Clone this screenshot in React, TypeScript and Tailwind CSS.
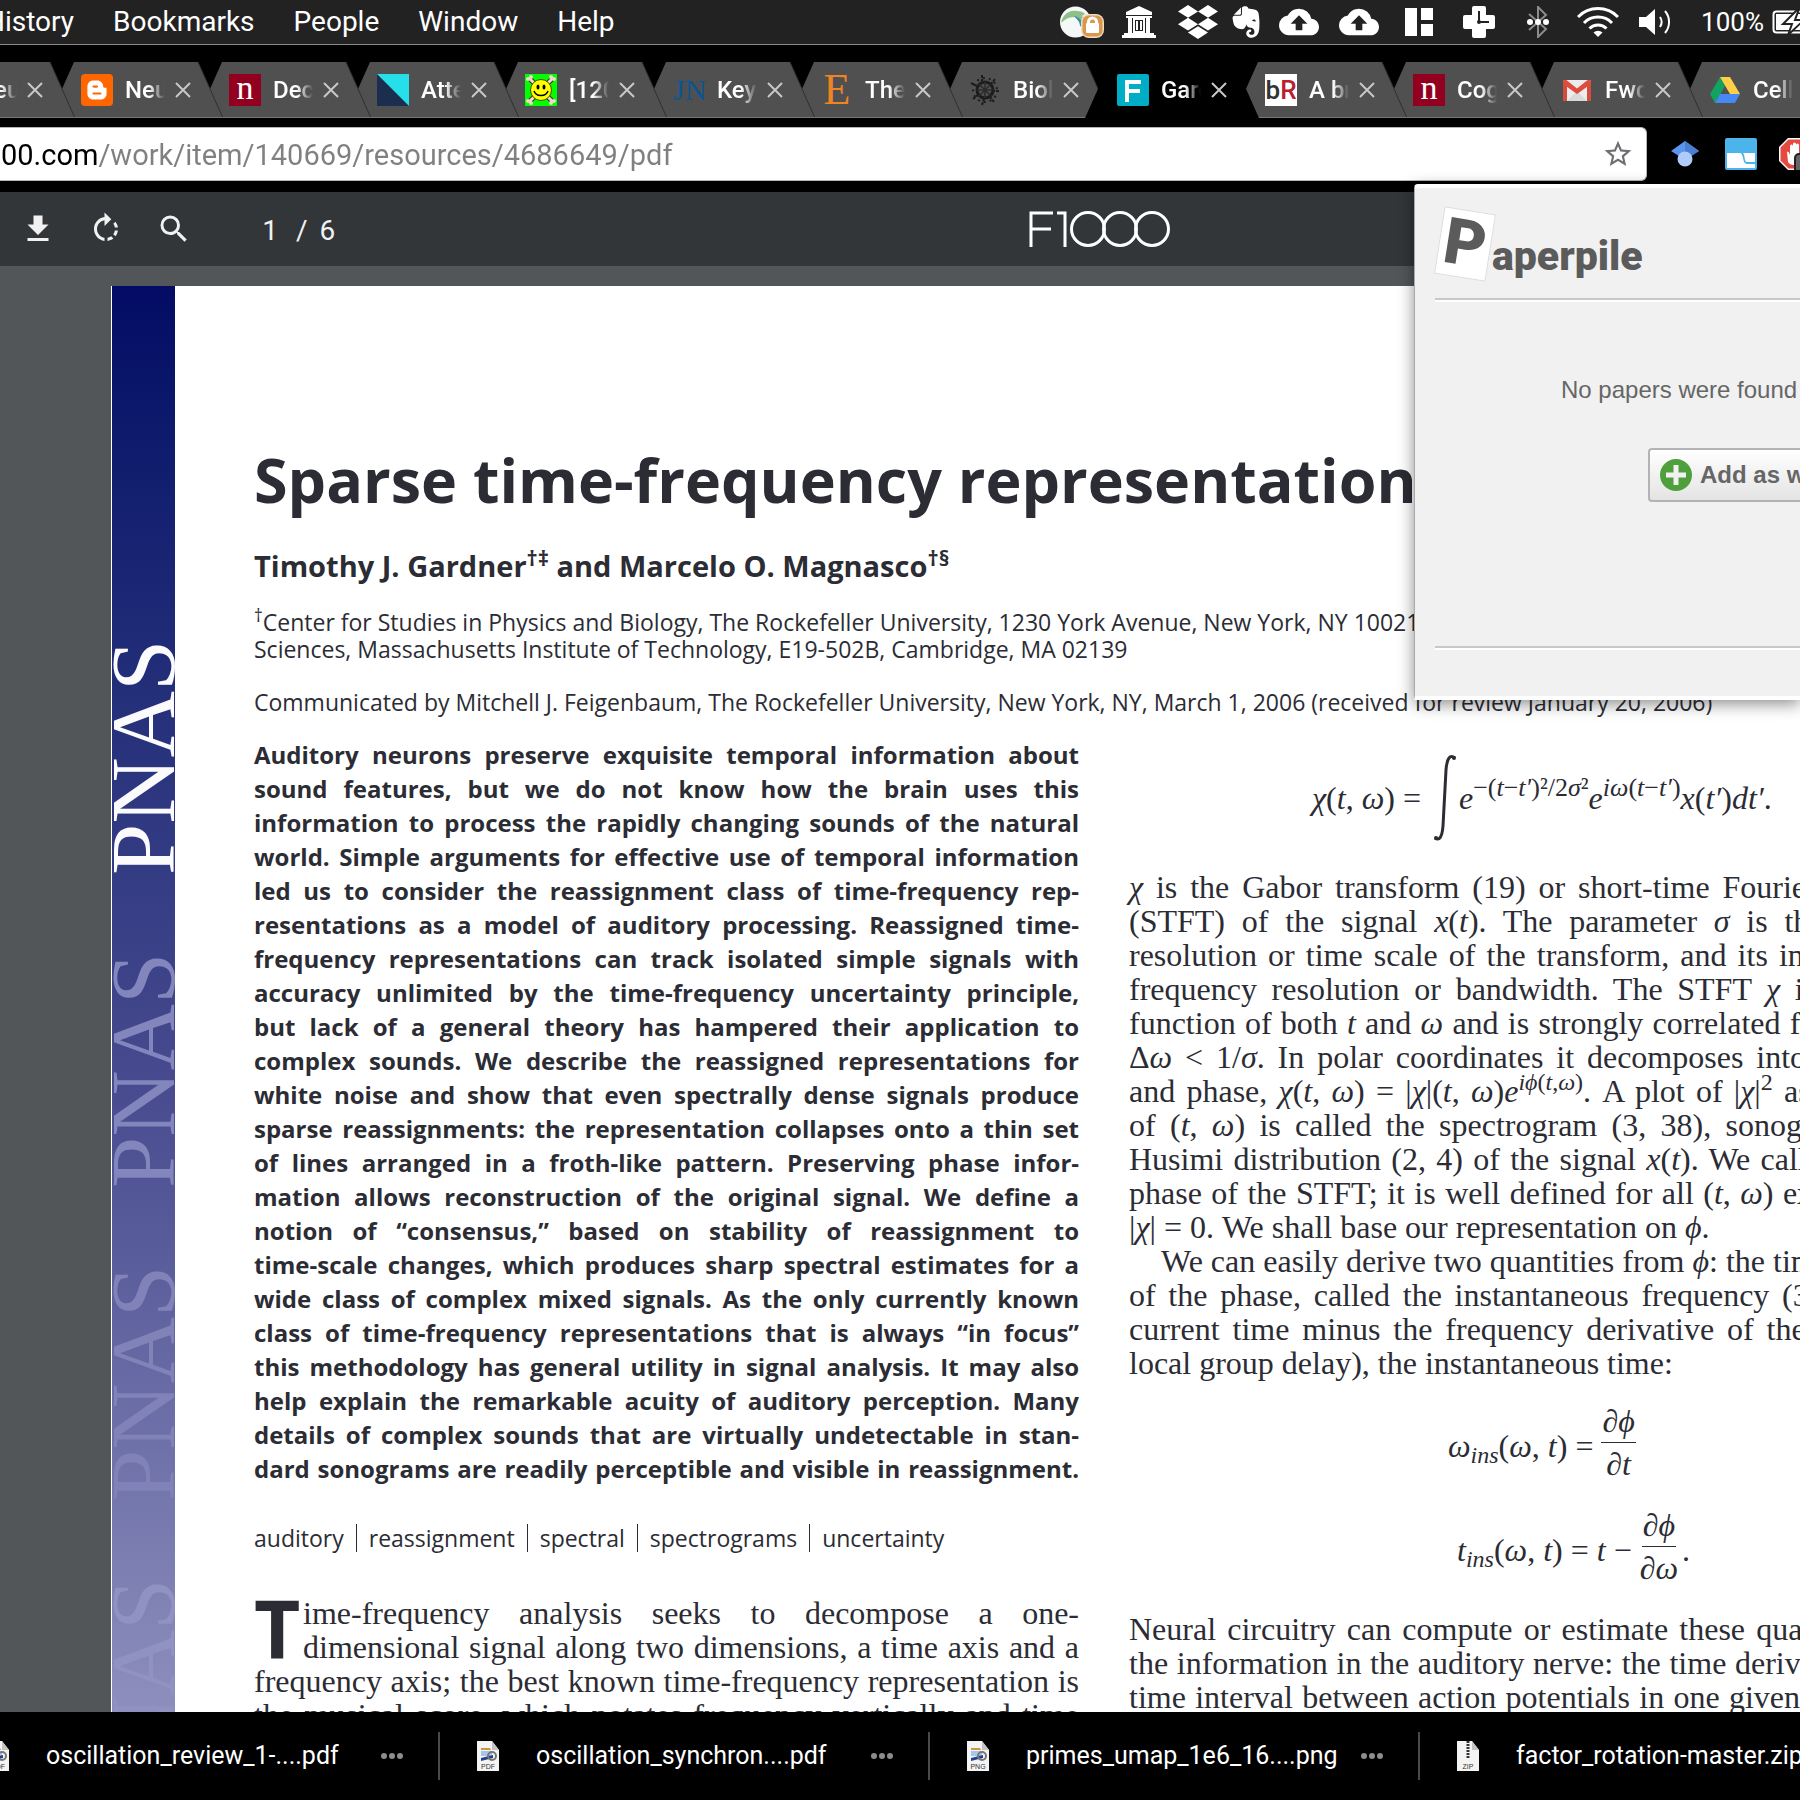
import React from "react";
import { FaDropbox, FaEvernote, FaBloggerB } from "react-icons/fa";
import { MdCloudUpload, MdFileDownload, MdRotateRight, MdSearch, MdStarBorder } from "react-icons/md";

const ui = "font-['Roboto',sans-serif]";

function GlobeLock() {
  return (
    <svg viewBox="0 0 44 32" className="h-8 w-11 shrink-0" aria-hidden="true">
      <circle cx="15.500" cy="16" r="15.500" fill="#f4f8f6" />
      <path d="M1 17C3 8 9 4 17 5c6 0 8 3 8 3l-3 2c4 5 3 10 1 13-1-6-4-10-9-12-5 0-9 2-13 6z" fill="#8fc08a" />
      <path d="M14 10c6 1 10 6 10 12l-4-2c0-4-3-7-6-10z" fill="#3f8fa8" />
      <rect x="21" y="8" width="23" height="24" rx="8" fill="#f0dcc0" />
      <rect x="22.500" y="9.500" width="20" height="21" rx="6" fill="#d9984c" />
      <rect x="26" y="17" width="13" height="10" rx="1" fill="#fff" />
      <path d="M28.500 18v-2a4 4 0 0 1 8 0v2" fill="none" stroke="#fff" strokeWidth="3" />
    </svg>
  );
}

function Temple() {
  return (
    <svg viewBox="0 0 34 32" className="h-8 w-[34px] shrink-0" fill="#fff" aria-hidden="true">
      <path d="M17 0 30 6v3H4V6z" />
      <path d="M4 10h26v2H4zM6 12h4v15H6zM24 12h4v15h-4zM2 27h30v2H2zM0 29h34v3H0z" />
      <path d="M11 12h12v15H11zM13 14v11h8V14z" fillRule="evenodd" />
      <path d="M14 15h2v9h-2zM18 15h2v9h-2z" />
    </svg>
  );
}

function Panels() {
  return (
    <svg viewBox="0 0 28 28" className="size-7 shrink-0" fill="#fff" aria-hidden="true">
      <path d="M0 0h12v28H0zM16 0h12v12H16zM16 16h12v12H16z" />
    </svg>
  );
}

function PlusClock() {
  return (
    <svg viewBox="0 0 32 32" className="size-8 shrink-0" aria-hidden="true">
      <path d="M11 0h10a2 2 0 0 1 2 2v7h7a2 2 0 0 1 2 2v10a2 2 0 0 1-2 2h-7v7a2 2 0 0 1-2 2H11a2 2 0 0 1-2-2v-7H2a2 2 0 0 1-2-2V11a2 2 0 0 1 2-2h7V2a2 2 0 0 1 2-2z" fill="#fff" />
      <path d="M16 5v11h10" stroke="#222" strokeWidth="2" fill="none" />
      <circle cx="16" cy="16" r="2" fill="#222" />
    </svg>
  );
}

function Bluetooth() {
  return (
    <svg viewBox="0 0 22 32" className="h-8 w-[22px] shrink-0" aria-hidden="true">
      <path d="M2 8l17 15-8 8V1l8 8L2 24" fill="none" stroke="#8c8c8c" strokeWidth="2" />
      <g fill="#fff">
        <circle cx="3" cy="16" r="3" />
        <circle cx="11" cy="16" r="3" />
        <circle cx="19" cy="16" r="3" />
      </g>
    </svg>
  );
}

function Wifi() {
  return (
    <svg viewBox="0 0 42 30" className="h-[30px] w-[42px] shrink-0" aria-hidden="true">
      <g fill="none" stroke="#fff" strokeWidth="3">
        <path d="M1 10a28 28 0 0 1 40 0" />
        <path d="M7 16a19.500 19.500 0 0 1 28 0" />
        <path d="M12.500 21.500a12 12 0 0 1 17 0" />
      </g>
      <path d="M16.500 25.500a6.500 6.500 0 0 1 9 0L21 30z" fill="#fff" />
    </svg>
  );
}

function Volume() {
  return (
    <svg viewBox="0 0 34 26" className="h-[26px] w-[34px] shrink-0" aria-hidden="true">
      <path d="M0 8h7l9-8v26l-9-8H0z" fill="#fff" />
      <g fill="none" stroke="#fff" strokeWidth="2">
        <path d="M21 8a9 9 0 0 1 0 10" />
        <path d="M26 2a17 17 0 0 1 0 22" />
      </g>
    </svg>
  );
}

function Battery() {
  return (
    <svg viewBox="0 0 50 26" className="h-[26px] w-[50px] shrink-0" aria-hidden="true">
      <rect x="1.500" y="2.500" width="42" height="21" rx="3" fill="none" stroke="#fff" strokeWidth="2" />
      <rect x="4" y="5" width="37" height="16" fill="#fff" />
      <path d="M26 0 11 15h9l-4 11 16-15h-9l4-11z" fill="#fff" stroke="#222" strokeWidth="2" />
    </svg>
  );
}

function MenuBar() {
  return (
    <header className={`flex h-[45px] shrink-0 items-center border-b border-[#8a8a8a] bg-[#222] text-[28px] leading-8 text-white ${ui}`}>
      <nav className="-ml-[15px] flex gap-[39px]">
        {["History", "Bookmarks", "People", "Window", "Help"].map((m) => (
          <button key={m}>{m}</button>
        ))}
      </nav>
      <div className="-mr-[22px] ml-auto flex shrink-0 items-center">
        <GlobeLock />
        <span className="ml-[18px] flex"><Temple /></span>
        <FaDropbox className="ml-[22px] size-10 shrink-0" />
        <FaEvernote className="ml-2.5 size-9 shrink-0" />
        <MdCloudUpload className="ml-[15px] size-10 shrink-0" />
        <MdCloudUpload className="ml-5 size-10 shrink-0" />
        <span className="ml-[26px] flex"><Panels /></span>
        <span className="ml-[30px] flex"><PlusClock /></span>
        <span className="ml-8 flex"><Bluetooth /></span>
        <span className="ml-7 flex"><Wifi /></span>
        <span className="ml-5 flex"><Volume /></span>
        <span className="ml-7 text-[26px]">100%</span>
        <span className="ml-2 flex"><Battery /></span>
      </div>
    </header>
  );
}

function NatureIcon() {
  return (
    <span className="flex size-8 items-center justify-center bg-[#93001f] pb-1 font-['Liberation_Serif',serif] text-[34px] leading-8 text-white">n</span>
  );
}

function Smiley() {
  return (
    <svg viewBox="0 0 32 32" className="size-8" aria-hidden="true">
      <rect width="32" height="32" fill="#0f0" />
      <path d="M4 4l24 24M28 4 4 28" stroke="#3a2a20" strokeWidth="5" />
      <path d="M4 4l24 24M28 4 4 28" stroke="#f3d9c8" strokeWidth="3" />
      <g fill="#f3d9c8">
        <circle cx="3" cy="5" r="2" /><circle cx="6" cy="3" r="2" /><circle cx="29" cy="5" r="2" /><circle cx="26" cy="3" r="2" />
        <circle cx="3" cy="27" r="2" /><circle cx="6" cy="29" r="2" /><circle cx="29" cy="27" r="2" /><circle cx="26" cy="29" r="2" />
      </g>
      <circle cx="16" cy="16" r="10.500" fill="#ff0" stroke="#554400" />
      <ellipse cx="13" cy="13" rx="1.500" ry="2.500" /><ellipse cx="19" cy="13" rx="1.500" ry="2.500" />
      <path d="M9 17c2 6 12 6 14 0" fill="none" stroke="#000" strokeWidth="1.500" />
    </svg>
  );
}

function Burst() {
  return (
    <svg viewBox="0 0 32 32" className="size-8" aria-hidden="true">
      <circle cx="16" cy="16" r="12" fill="none" stroke="#1c1c1c" strokeWidth="2" strokeDasharray="2 4" />
      <circle cx="16" cy="16" r="8" fill="none" stroke="#1c1c1c" strokeWidth="3" />
      <path d="M16 8v16M8 16h16M10 10l12 12M22 10 10 22" stroke="#2b2b2b" strokeWidth="1.500" />
      <path d="M13 1v6M2 9l6 3M26 5l-4 5M30 17h-6M25 28l-4-5M13 31l2-6M4 25l5-4" stroke="#1c1c1c" strokeWidth="2" strokeDasharray="3 1" />
    </svg>
  );
}

function Gmail() {
  return (
    <svg viewBox="0 0 32 32" className="size-8" aria-hidden="true">
      <rect x="2" y="6" width="28" height="21" rx="2" fill="#ececec" />
      <path d="M6 27 16 17l10 10z" fill="#dadada" />
      <path d="M2 27V8l4 3v16zM30 27V8l-4 3v16z" fill="#d54b3d" />
      <path d="M2 8c0-2 2-3 4-1.500l10 8 10-8C28 5 30 6 30 8v2L16 20 2 10z" fill="#df4c3e" />
    </svg>
  );
}

function Drive() {
  return (
    <svg viewBox="0 0 32 32" className="size-8" aria-hidden="true">
      <path d="M11 3 1 20l5 9 10-17z" fill="#11a35f" />
      <path d="M11 3h10l10 17H21z" fill="#ffcf48" />
      <path d="M11 20h20l-5 9H6z" fill="#4688f4" />
    </svg>
  );
}

const tabs: { title: string; icon: React.ReactNode; active?: boolean }[] = [
  { title: "Neur", icon: <span className="size-8" /> },
  {
    title: "Neur",
    icon: (
      <span className="flex size-8 items-center justify-center rounded bg-[#ff6600] text-white">
        <FaBloggerB className="size-[22px]" />
      </span>
    ),
  },
  { title: "Deco", icon: <NatureIcon /> },
  {
    title: "Atten",
    icon: (
      <svg viewBox="0 0 32 32" className="size-8" aria-hidden="true">
        <rect width="32" height="32" fill="#26dfe8" />
        <path d="M0 0v32h32z" fill="#1b2e50" />
      </svg>
    ),
  },
  { title: "[120", icon: <Smiley /> },
  { title: "Key", icon: <span className="w-8 font-['Liberation_Serif',serif] text-[30px] font-normal leading-8 text-[#0a5596]">JN</span> },
  { title: "The", icon: <span className="w-8 text-center font-['Liberation_Serif',serif] text-[44px] font-normal leading-8 text-[#f08424]">E</span> },
  { title: "Biolo", icon: <Burst /> },
  {
    title: "Gard",
    active: true,
    icon: (
      <svg viewBox="0 0 32 32" className="size-8" aria-hidden="true">
        <rect width="32" height="32" rx="2" fill="#00adc6" />
        <path d="M8 6h16v4H12v5h11v4H12v9H8z" fill="#fff" />
      </svg>
    ),
  },
  {
    title: "A bra",
    icon: (
      <span className="flex size-8 items-center justify-center bg-white text-[26px] leading-8">
        <span className="text-[#333]">b</span>
        <span className="text-[#b8202f]">R</span>
      </span>
    ),
  },
  { title: "Cogn", icon: <NatureIcon /> },
  { title: "Fwd:", icon: <Gmail /> },
  { title: "Cell p", icon: <Drive /> },
];

const stacking = ["z-[13]", "z-[12]", "z-[11]", "z-10", "z-9", "z-8", "z-7", "z-6", "z-20", "z-5", "z-4", "z-3", "z-2"];

function TabStrip() {
  return (
    <div role="tablist" className={`flex h-[73px] shrink-0 bg-black pt-[17px] text-2xl font-medium text-white ${ui}`}>
      <div className="-ml-[99px] flex">
        {tabs.map((t, i) => (
          <div key={i} className={`relative -mr-[26px] h-14 w-[174px] shrink-0 ${stacking[i]}`}>
            <svg viewBox="0 0 174 56" className="absolute inset-0 h-14 w-[174px]" aria-hidden="true">
              <path d="M0 56 25 0h124l25 56z" fill={t.active ? "#000" : "#505050"} />
              {!t.active && <path d="M149 0l25 56" stroke="#303030" fill="none" />}
              {!t.active && <path d="M0 55.500h174" stroke="#777" fill="none" />}
            </svg>
            <div className="relative flex h-14 items-center pl-8">
              <button role="tab" aria-selected={!!t.active} className="flex items-center">
                {t.icon}
                <span className="ml-3 w-10 overflow-hidden whitespace-nowrap text-left mask-r-from-60%">{t.title}</span>
              </button>
              <button aria-label="Close tab" className="ml-2.5">
                <svg viewBox="0 0 16 16" className="size-4" aria-hidden="true">
                  <path d="M1 1l14 14M15 1 1 15" stroke="#c8c8c8" strokeWidth="2" />
                </svg>
              </button>
            </div>
          </div>
        ))}
      </div>
    </div>
  );
}

function AddressBar() {
  return (
    <div className="flex h-[74px] shrink-0 items-start bg-black pt-[9px]">
      <div className="mr-6 flex h-[54px] flex-1 items-center rounded-r-md border-y border-r border-[#b5b5b5] bg-white">
        <input
          aria-label="Address"
          defaultValue="00.com/work/item/140669/resources/4686649/pdf"
          className={`mt-0.5 min-w-0 flex-1 bg-[linear-gradient(90deg,#000_98px,#808080_98px)] bg-clip-text pl-px text-[29px] leading-10 text-transparent outline-none ${ui}`}
        />
        <button aria-label="Bookmark this page" className="mr-3">
          <MdStarBorder className="size-8 text-[#6e6e73]" />
        </button>
      </div>
      <div className="-mr-4 flex w-[145px] items-center gap-[26px] pt-[11px]">
        <svg viewBox="0 0 28 32" className="h-8 w-7 shrink-0" aria-hidden="true">
          <path d="M14 3 28 13 14 22 0 13z" fill="#5b94ee" />
          <path d="M14 3 28 13 14 22z" fill="#4a7fd0" />
          <circle cx="14" cy="21" r="7.500" fill="#afcbfa" />
        </svg>
        <svg viewBox="0 0 32 32" className="size-8 shrink-0" aria-hidden="true">
          <rect width="32" height="32" rx="2" fill="#4bb4ea" />
          <path d="M2 15h13c4 0 2 11 7 11h8v4H2z" fill="#fff" />
          <path d="M18 15h12v9h-8c-3 0-2-8-4-9z" fill="#fff" />
        </svg>
        <svg viewBox="0 0 32 32" className="-ml-1 size-8 shrink-0" aria-hidden="true">
          <path d="M9 0h14l9 9v14l-9 9H9l-9-9V9z" fill="#fff" />
          <path d="M9.500 1.500h13l8 8v13l-8 8h-13l-8-8v-13z" fill="#e5493f" />
          <path d="M8 14c2-1 3 2 3 4V8a1.500 1.500 0 0 1 3 0V6a1.500 1.500 0 0 1 3 0v1a1.500 1.500 0 0 1 3 0v16c0 5-9 5-11 1z" fill="#fff" />
          <rect x="16" y="16" width="20" height="24" rx="4" fill="#666" stroke="#222" strokeWidth="2" />
        </svg>
      </div>
    </div>
  );
}

function PdfToolbar() {
  return (
    <div className={`-mr-[400px] flex h-[74px] shrink-0 items-center bg-[#323639] text-[#f1f1f1] ${ui}`}>
      <div className="flex flex-1 items-center">
        <button aria-label="Download" className="ml-5"><MdFileDownload className="size-9" /></button>
        <button aria-label="Rotate" className="ml-8"><MdRotateRight className="size-9" /></button>
        <button aria-label="Search" className="ml-8"><MdSearch className="size-9" /></button>
        <label className="ml-[68px] flex items-center gap-4 pt-1 text-[28px]">
          <input aria-label="Page" defaultValue="1" className="w-5 bg-transparent text-center outline-none" />
          <span>/</span>
          <span className="-ml-1">6</span>
        </label>
      </div>
      <svg viewBox="0 0 142 36" className="h-9 w-[142px] shrink-0" role="img" aria-label="F1000">
        <g fill="none" stroke="#fff" strokeWidth="3">
          <path d="M2 36V2h22M2 18h20M28 2h8v34" />
          <circle cx="59" cy="18" r="16.500" />
          <circle cx="91" cy="18" r="16.500" />
          <circle cx="123" cy="18" r="16.500" />
        </g>
      </svg>
      <div className="flex-1" />
    </div>
  );
}

const abstractLines = [
  "Auditory neurons preserve exquisite temporal information about",
  "sound features, but we do not know how the brain uses this",
  "information to process the rapidly changing sounds of the natural",
  "world. Simple arguments for effective use of temporal information",
  "led us to consider the reassignment class of time-frequency rep-",
  "resentations as a model of auditory processing. Reassigned time-",
  "frequency representations can track isolated simple signals with",
  "accuracy unlimited by the time-frequency uncertainty principle,",
  "but lack of a general theory has hampered their application to",
  "complex sounds. We describe the reassigned representations for",
  "white noise and show that even spectrally dense signals produce",
  "sparse reassignments: the representation collapses onto a thin set",
  "of lines arranged in a froth-like pattern. Preserving phase infor-",
  "mation allows reconstruction of the original signal. We define a",
  "notion of “consensus,” based on stability of reassignment to",
  "time-scale changes, which produces sharp spectral estimates for a",
  "wide class of complex mixed signals. As the only currently known",
  "class of time-frequency representations that is always “in focus”",
  "this methodology has general utility in signal analysis. It may also",
  "help explain the remarkable acuity of auditory perception. Many",
  "details of complex sounds that are virtually undetectable in stan-",
  "dard sonograms are readily perceptible and visible in reassignment.",
];

function Lines({ items, lastLoose }: { items: React.ReactNode[]; lastLoose?: boolean }) {
  return (
    <>
      {items.map((l, i) => (
        <span
          key={i}
          className={
            lastLoose && i === items.length - 1
              ? "block whitespace-nowrap"
              : "block whitespace-nowrap text-justify [text-align-last:justify]"
          }
        >
          {l}
        </span>
      ))}
    </>
  );
}

function Sup({ children }: { children: React.ReactNode }) {
  return <sup className="text-2xl leading-none">{children}</sup>;
}

function FormulaSup({ children }: { children: React.ReactNode }) {
  return <sup className="text-[26px] leading-none">{children}</sup>;
}

function Frac({ top, bottom }: { top: string; bottom: string }) {
  return (
    <span className="flex flex-col items-center pb-2 italic">
      <span className="border-b border-[#2b2c34] px-px pb-1">{top}</span>
      <span className="pt-1">{bottom}</span>
    </span>
  );
}

const gaborLines = [
  <><i>χ</i> is the Gabor transform (19) or short-time Fourier transform</>,
  <>(STFT) of the signal <i>x</i>(<i>t</i>). The parameter <i>σ</i> is the temporal</>,
  <>resolution or time scale of the transform, and its inverse is the</>,
  <>frequency resolution or bandwidth. The STFT <i>χ</i> is a smooth</>,
  <>function of both <i>t</i> and <i>ω</i> and is strongly correlated for Δ<i>t</i> &lt; <i>σ</i> or</>,
  <>Δ<i>ω</i> &lt; 1/<i>σ</i>. In polar coordinates it decomposes into magnitude</>,
  <>and phase, <i>χ</i>(<i>t</i>, <i>ω</i>) = |<i>χ</i>|(<i>t</i>, <i>ω</i>)<i>e</i><Sup><i>iϕ</i>(<i>t</i>,<i>ω</i>)</Sup>. A plot of |<i>χ</i>|<Sup>2</Sup> as a function</>,
  <>of (<i>t</i>, <i>ω</i>) is called the spectrogram (3, 38), sonogram, or the</>,
  <>Husimi distribution (2, 4) of the signal <i>x</i>(<i>t</i>). We call <i>ϕ</i>(<i>t</i>, <i>ω</i>) the</>,
  <>phase of the STFT; it is well defined for all (<i>t</i>, <i>ω</i>) except where</>,
  <>|<i>χ</i>| = 0. We shall base our representation on <i>ϕ</i>.</>,
];

const deriveLines = [
  <span className="pl-8">We can easily derive two quantities from <i>ϕ</i>: the time derivative</span>,
  <>of the phase, called the instantaneous frequency (33), and the</>,
  <>current time minus the frequency derivative of the phase (the</>,
  <>local group delay), the instantaneous time:</>,
];

const neuralLines = [
  "Neural circuitry can compute or estimate these quantities from",
  "the information in the auditory nerve: the time derivative, as the",
  "time interval between action potentials in one given fiber of the",
  "auditory nerve, and the frequency derivative, from a comparison",
];

const markTones = ["text-[#fbfbfd]", "text-[#8385bd]", "text-[#8082b8]", "text-[#9092c1]"];

function Paper() {
  return (
    <article className="ml-[111px] mt-5 flex h-[1440px] bg-white text-[#2b2c34]">
      <aside className="ml-px flex w-[63px] shrink-0 flex-col overflow-hidden bg-linear-to-b from-[#040b64] via-[#474a8e] via-55% to-[#8f90bd] pt-[315px]">
        {markTones.map((tone) => (
          <span
            key={tone}
            className={`flex h-[313px] w-[63px] shrink-0 rotate-180 items-end justify-center font-['Liberation_Serif',serif] text-[92px] leading-[63px] [writing-mode:vertical-rl] ${tone}`}
          >
            PNAS
          </span>
        ))}
      </aside>
      <div className="shrink-0 pl-[79px] font-['Open_Sans',sans-serif]">
        <h1 className="mt-[150px] whitespace-nowrap text-[61px] font-bold leading-[88px]">
          Sparse time-frequency representations
        </h1>
        <p className="mt-6 whitespace-nowrap text-[29px] font-bold leading-9">
          Timothy J. Gardner<sup className="leading-none">†‡</sup> and Marcelo O. Magnasco<sup className="leading-none">†§</sup>
        </p>
        <p className="mt-[25px] whitespace-nowrap text-[23px] font-medium leading-[27px]">
          <sup className="leading-none">†</sup>Center for Studies in Physics and Biology, The Rockefeller University, 1230 York Avenue, New York, NY 10021
          <br />
          Sciences, Massachusetts Institute of Technology, E19-502B, Cambridge, MA 02139
        </p>
        <p className="mt-[26px] whitespace-nowrap text-[23px] font-medium leading-[27px]">
          Communicated by Mitchell J. Feigenbaum, The Rockefeller University, New York, NY, March 1, 2006 (received for review January 20, 2006)
        </p>
        <div className="mt-[22px] flex gap-[50px]">
          <div className="w-[825px] shrink-0">
            <p className="text-2xl font-bold leading-[34px]">
              <Lines items={abstractLines} />
            </p>
            <p className="mt-[38px] flex items-center text-[23px] font-medium leading-[34px]">
              {["auditory", "reassignment", "spectral", "spectrograms", "uncertainty"].map((k, i) => (
                <span key={k} className={i ? "ml-3 border-l border-[#2b2c34] pl-3 leading-7" : "leading-7"}>{k}</span>
              ))}
            </p>
            <p className="mt-11 font-['Liberation_Serif',serif] text-[32px] leading-[34px]">
              <span className="float-left mr-1 h-[68px] w-[45px] font-['Open_Sans',sans-serif] text-[80px] font-bold leading-[64px]">T</span>
              <Lines
                items={[
                  "ime-frequency analysis seeks to decompose a one-",
                  "dimensional signal along two dimensions, a time axis and a",
                  "frequency axis; the best known time-frequency representation is",
                  "the musical score, which notates frequency vertically and time",
                ]}
              />
            </p>
          </div>
          <div className="w-[825px] shrink-0 font-['Liberation_Serif',serif] text-[32px] leading-[34px]">
            <div className="flex h-[120px] items-center pl-[183px]">
              <span className="whitespace-nowrap"><i>χ</i>(<i>t</i>, <i>ω</i>) =</span>
              <svg viewBox="0 0 24 88" className="ml-3 h-[88px] w-6" aria-label="integral">
                <path d="M2 84c4 3 7 0 8-12l3-56C14 4 17 0 22 4" fill="none" stroke="#2b2c34" strokeWidth="3" />
                <circle cx="3" cy="84" r="2" fill="#2b2c34" />
                <circle cx="21" cy="4" r="2" fill="#2b2c34" />
              </svg>
              <span className="ml-0.5 whitespace-nowrap">
                <i>e</i><FormulaSup>−(<i>t</i>−<i>t′</i>)²/2<i>σ</i>²</FormulaSup><i>e</i><FormulaSup><i>iω</i>(<i>t</i>−<i>t′</i>)</FormulaSup><i>x</i>(<i>t′</i>)<i>dt′</i>.
              </span>
            </div>
            <p className="mt-3"><Lines items={gaborLines} lastLoose /></p>
            <p><Lines items={deriveLines} lastLoose /></p>
            <div className="mt-7 flex h-[76px] items-center gap-2 pl-[319px]">
              <span><i>ω<sub>ins</sub></i>(<i>ω</i>, <i>t</i>) =</span>
              <Frac top="∂ϕ" bottom="∂t" />
            </div>
            <div className="mt-7 flex h-[76px] items-center gap-2 pl-[328px]">
              <span><i>t<sub>ins</sub></i>(<i>ω</i>, <i>t</i>) = <i>t</i> −</span>
              <Frac top="∂ϕ" bottom="∂ω" />
              <span className="-ml-1">.</span>
            </div>
            <p className="mt-6"><Lines items={neuralLines} /></p>
          </div>
        </div>
      </div>
    </article>
  );
}

function Popup() {
  return (
    <section className="absolute left-[1414px] right-0 top-[184px] z-30 h-[516px] overflow-hidden rounded-tl border-b-4 border-l border-t-4 border-b-white border-l-[#aaa] border-t-white bg-[#f1f1f1] pl-5 font-['Liberation_Sans',sans-serif] text-[#666] shadow-[0_4px_16px_rgba(0,0,0,0.45)]">
      <div className="flex h-[112px] items-start border-b-2 border-[#c8c8c8] pt-4">
        <span className="ml-1 mt-1.5 flex h-[68px] w-[52px] shrink-0 rotate-[9deg] items-center justify-center border border-[#ddd] bg-white font-['Roboto',sans-serif] text-[64px] font-black text-[#5b5b5b]">P</span>
        <span className="ml-px mt-7 font-['Roboto',sans-serif] text-[41px] font-black leading-[48px] text-[#5b5b5b]">aperpile</span>
      </div>
      <div className="h-[348px] border-b-2 border-t-2 border-b-[#c8c8c8] border-t-white">
        <p className="ml-[126px] mt-[74px] whitespace-nowrap text-2xl leading-7">No papers were found on this page.</p>
        <button className="ml-[213px] mt-[44px] flex h-[54px] w-[260px] items-center gap-2 whitespace-nowrap rounded border-2 border-[#b3b3b3] bg-linear-to-b from-white to-[#e4e4e4] pl-2.5 text-2xl font-bold">
          <svg viewBox="0 0 32 32" className="size-8 shrink-0" aria-hidden="true">
            <circle cx="16" cy="16" r="16" fill="#509f3d" />
            <path d="M16 6v20M6 16h20" stroke="#f1f1f1" strokeWidth="5" />
          </svg>
          Add as webpage
        </button>
      </div>
      <div className="h-0.5 bg-white" />
    </section>
  );
}

function FileIcon({ kind }: { kind: string }) {
  return (
    <svg viewBox="0 0 22 30" className="h-[30px] w-[22px] shrink-0" aria-hidden="true">
      <path d="M0 0h15l7 9v21H0z" fill="#f4f4f4" />
      <path d="M15 0l7 9h-7z" fill="#c4c4c4" />
      {kind === "ZIP" ? (
        <path d="M11 0v17" stroke="#333" strokeWidth="3" strokeDasharray="2 1" />
      ) : (
        <>
          <path d="M4 7h9l1 2H4z" fill="#c99a3b" />
          <path d="M4 10h11v5H4z" fill="#a8c6ea" />
          <path d="M4 17l12-3v3L4 20z" fill="#24418e" />
          <circle cx="15" cy="15" r="4" fill="none" stroke="#777" strokeWidth="2" />
        </>
      )}
      <text x="11" y="28" fontSize="7" textAnchor="middle" fill="#333" fontFamily="Liberation Sans">{kind}</text>
    </svg>
  );
}

const downloads = [
  ["oscillation_review_1-....pdf", "PDF"],
  ["oscillation_synchron....pdf", "PDF"],
  ["primes_umap_1e6_16....png", "PNG"],
  ["factor_rotation-master.zip", "ZIP"],
];

function DownloadShelf() {
  return (
    <footer className={`flex h-[88px] shrink-0 items-center bg-black text-[25px] text-white ${ui}`}>
      <div className="-ml-[50px] flex">
        {downloads.map(([name, kind]) => (
          <div key={name} className="flex h-12 w-[490px] shrink-0 items-center border-r-2 border-[#4a4a4a] pl-[37px]">
            <button className="flex flex-1 items-center gap-[37px] whitespace-nowrap">
              <FileIcon kind={kind} />
              {name}
            </button>
            <button aria-label="More actions" className="mr-[35px]">
              <svg viewBox="0 0 22 6" className="h-1.5 w-[22px]" fill="#8c8c8c" aria-hidden="true">
                <circle cx="3" cy="3" r="3" /><circle cx="11" cy="3" r="3" /><circle cx="19" cy="3" r="3" />
              </svg>
            </button>
          </div>
        ))}
      </div>
    </footer>
  );
}

export default function App() {
  return (
    <div className="relative flex h-screen flex-col overflow-hidden bg-black">
      <MenuBar />
      <TabStrip />
      <AddressBar />
      <PdfToolbar />
      <main className="min-h-0 flex-1 overflow-hidden bg-[#525659]">
        <Paper />
      </main>
      <DownloadShelf />
      <Popup />
    </div>
  );
}
